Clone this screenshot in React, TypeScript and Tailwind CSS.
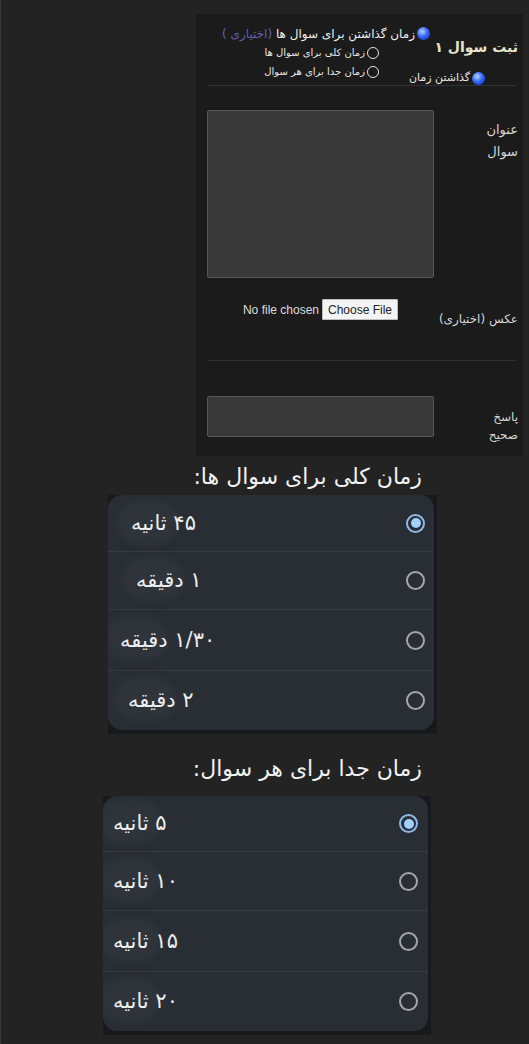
import React, { useState } from 'react';

const fa = { fontFamily: '"DejaVu Sans", "Noto Sans", sans-serif' };

const Sphere = () => (
  <span className="inline-block w-[13px] h-[13px] shrink-0 rounded-full bg-[radial-gradient(circle_at_40%_35%,#b9d4ff_0%,#3366ff_45%,#0a2bb0_100%)]"></span>
);

const Ring = () => (
  <span className="inline-block w-[12px] h-[12px] shrink-0 rounded-full border border-[#e5e5e5]"></span>
);

const totalOptions = [
  { id: 't45', label: '۴۵ ثانیه', row: 'h-[56px]', pad: 'pl-[23px]' },
  { id: 't60', label: '۱ دقیقه', row: 'h-[58px]', pad: 'pl-[28px]' },
  { id: 't90', label: '۱/۳۰ دقیقه', row: 'h-[61px]', pad: 'pl-[12px]' },
  { id: 't120', label: '۲ دقیقه', row: 'h-[60px]', pad: 'pl-[20px]' },
];

const eachOptions = [
  { id: 'e5', label: '۵ ثانیه', row: 'h-[55px]', pad: 'pl-[10px]' },
  { id: 'e10', label: '۱۰ ثانیه', row: 'h-[59px]', pad: 'pl-[10px]' },
  { id: 'e15', label: '۱۵ ثانیه', row: 'h-[61px]', pad: 'pl-[10px]' },
  { id: 'e20', label: '۲۰ ثانیه', row: 'h-[60px]', pad: 'pl-[10px]' },
];

interface Option {
  id: string;
  label: string;
  row: string;
  pad: string;
}

const RadioDot: React.FC<{ on: boolean }> = ({ on }) =>
  on ? (
    <span className="w-[19px] h-[19px] rounded-full border-2 border-[#8fb8e8] flex items-center justify-center">
      <span className="w-[10px] h-[10px] rounded-full bg-[#9fd0ff]"></span>
    </span>
  ) : (
    <span className="w-[19px] h-[19px] rounded-full border-2 border-[#a3a6ab]"></span>
  );

const OptionList: React.FC<{ options: Option[]; radioPad: string }> = ({ options, radioPad }) => {
  const [picked, setPicked] = useState(options[0].id);
  return (
    <div className="bg-[#17191c] pr-[3px] pb-[4px]">
      <div className="bg-[#292d34] rounded-[14px] overflow-hidden">
        {options.map((o, i) => (
          <div
            key={o.id}
            onClick={() => setPicked(o.id)}
            className={`${o.row} ${o.pad} ${radioPad} flex items-center justify-between cursor-pointer ${i > 0 ? 'border-t border-[#363a41]' : ''}`}
          >
            <span className="relative">
              {/* faint smudge behind the label */}
              <span className="absolute -left-[14px] -top-[10px] w-[62px] h-[44px] rounded-full bg-[#2f343b] blur-[3px]"></span>
              <span className="relative text-[21px] leading-[26px] text-[#eceef1]" dir="rtl" style={fa}>
                {o.label}
              </span>
            </span>
            <RadioDot on={picked === o.id} />
          </div>
        ))}
      </div>
    </div>
  );
};

export default function App() {
  return (
    <div className="w-[529px] h-[1044px] bg-[#232323] border-l border-[#3a3a3a] overflow-hidden" style={fa}>
      {/* form card */}
      <div dir="rtl" className="ml-[195px] mt-[14px] w-[327px] h-[442px] bg-[#1b1b1b]">
        <div className="mr-[7px] ml-[12px] h-[72px] border-b border-[#333333] flex items-start">
          <div className="w-[79px] -mr-[2px] shrink-0 flex flex-col items-start">
            <h1 className="mt-[23px] text-[14px] leading-[20px] font-bold text-[#e6e4c8] whitespace-nowrap">ثبت سوال ۱</h1>
            <label className="mt-[13px] mr-[33px] flex items-center gap-[2px] whitespace-nowrap shrink-0 text-[11px] leading-[16px] text-[#e8e8e8]">
              <Sphere />
              گذاشتن زمان
            </label>
          </div>
          <div className="flex-1 pt-[10px] flex flex-col items-start">
            <label className="mr-[9px] h-[19px] flex items-center gap-[2px] whitespace-nowrap text-[12px] text-[#f0f0f0]">
              <Sphere />
              <span>
                زمان گذاشتن برای سوال ها <span className="text-[#5f60b0]">(اختیاری )</span>
              </span>
            </label>
            <label className="mr-[60px] h-[19px] flex items-center gap-[2px] whitespace-nowrap text-[10px] text-[#e8e8e8]">
              <Ring />
              زمان کلی برای سوال ها
            </label>
            <label className="mr-[60px] h-[19px] flex items-center gap-[2px] whitespace-nowrap text-[10px] text-[#e8e8e8]">
              <Ring />
              زمان جدا برای هر سوال
            </label>
          </div>
        </div>

        <div className="h-[192px] flex items-start">
          <div className="w-[89px] shrink-0 pr-[5px] pt-[33px] text-[13px] leading-[22px] text-[#d6d6d6]">
            <div>عنوان</div>
            <div>سوال</div>
          </div>
          <div className="pl-[11px] pt-[24px]">
            <div className="w-[227px] h-[168px] bg-[#393939] border border-[#575757] rounded-[2px]"></div>
          </div>
        </div>

        <div className="h-[82px] flex items-start">
          <div className="w-[89px] shrink-0 pr-[5px] pt-[33px] text-[12px] leading-[16px] text-[#d6d6d6] whitespace-nowrap">عکس (اختیاری)</div>
          <div className="w-[227px] ml-[11px] pt-[21px] flex justify-center" dir="ltr">
            <div className="flex items-center gap-[3px]" style={{ fontFamily: '"Liberation Sans", Arial, sans-serif' }}>
              <span className="text-[12px] text-[#dddddd]">No file chosen</span>
              <button className="h-[21px] px-[5px] bg-[#f4f4f4] border border-[#bdbdbd] rounded-[1px] text-[12px] text-[#222]">Choose File</button>
            </div>
          </div>
        </div>

        <div className="mr-[7px] ml-[12px] h-px bg-[#2f2f2f]"></div>

        <div className="h-[95px] flex items-start">
          <div className="w-[89px] shrink-0 pr-[5px] pt-[47px] text-[12px] leading-[18px] text-[#d6d6d6]">
            <div>پاسخ</div>
            <div>صحیح</div>
          </div>
          <div className="pl-[11px] pt-[35px]">
            <div className="w-[227px] h-[41px] bg-[#393939] border border-[#575757] rounded-[2px]"></div>
          </div>
        </div>
      </div>

      {/* total time */}
      <div dir="rtl">
        <h2 className="mt-[7px] mr-[107px] text-[22px] leading-[28px] text-[#f2f2f2]">زمان کلی برای سوال ها:</h2>
      </div>
      <div className="mt-[4px] ml-[107px] w-[329px]">
        <OptionList options={totalOptions} radioPad="pr-[9px]" />
      </div>

      {/* per question time */}
      <div dir="rtl">
        <h2 className="mt-[21px] mr-[107px] text-[22px] leading-[28px] text-[#f2f2f2]">زمان جدا برای هر سوال:</h2>
      </div>
      <div className="mt-[13px] ml-[102px] w-[328px]">
        <OptionList options={eachOptions} radioPad="pr-[10px]" />
      </div>
    </div>
  );
}
